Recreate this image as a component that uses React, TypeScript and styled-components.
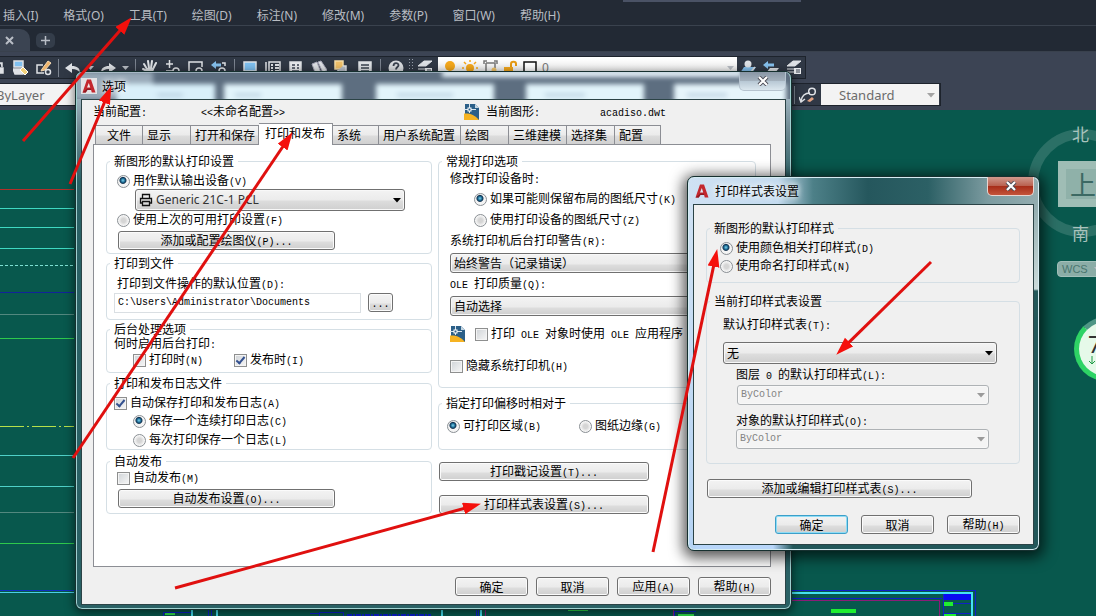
import React from "react";
import styled, { createGlobalStyle, css } from "styled-components";

const songti = '"Noto Sans CJK SC", sans-serif';
const yahei = '"Noto Sans", "Noto Sans CJK SC", sans-serif';

const GlobalStyle = createGlobalStyle`
  *, *::before, *::after { box-sizing: border-box; }
  body { margin: 0; background: #08584d; font-family: ${songti}; font-size: 12px; line-height: 14px; color: #000; }
  button, input, select { font: inherit; color: inherit; margin: 0; }
`;

/* ---------- application shell ---------- */

const Shell = styled.div`
  position: relative;
  display: flex;
  flex-direction: column;
  min-height: 100vh;
  overflow: hidden;
`;

const MenuBar = styled.nav`
  display: flex;
  align-items: center;
  gap: 25px;
  height: 26px;
  padding: 6px 3px 0;
  background: #232a35;
  border-bottom: 1px solid #3a424e;
  font-family: ${yahei};
`;

const MenuItem = styled.a`
  color: #b9bdc3;
  text-decoration: none;
  white-space: nowrap;
  line-height: 18px;
`;

const TitleEdge = styled.span`
  position: absolute;
  top: 0;
  left: 623px;
  width: 178px;
  height: 2px;
  background: #4a5265;
`;

const FileTabs = styled.div`
  display: flex;
  align-items: flex-end;
  gap: 6px;
  height: 26px;
  background: #222934;
  border-bottom: 1px solid #39414d;
`;

const FileTab = styled.button<{ $plus?: boolean }>`
  display: flex;
  align-items: center;
  justify-content: center;
  border: 0;
  padding: 0;
  color: #b4bac2;
  ${(p) =>
    p.$plus
      ? css`width: 19px; height: 15px; margin-bottom: 3px; border-radius: 5px; background: #343d4a;`
      : css`width: 30px; height: 22px; padding-right: 11px; border-radius: 0 10px 0 0; background: #3b4452;`}
`;

const Toolbars = styled.div`
  display: flex;
  flex-direction: column;
  align-items: flex-start;
  gap: 4px;
  height: 58px;
  padding-top: 4px;
  background: #3c4454;
`;

const ToolRow = styled.div`
  display: flex;
  align-items: center;
  height: 23px;
  background: #303845;
  border: 1px solid #1d232c;
  border-left: 0;
`;

const ToolGroup = styled.div<{ $gap?: number; $pad?: number }>`
  display: flex;
  align-items: center;
  gap: ${(p) => p.$gap ?? 7}px;
  padding: 0 ${(p) => p.$pad ?? 5}px;
`;

const Tool = styled.button<{ $w?: number }>`
  display: flex;
  align-items: center;
  justify-content: center;
  width: ${(p) => p.$w ?? 16}px;
  height: 18px;
  padding: 0;
  border: 0;
  background: none;
`;

const Divider = styled.span`
  width: 1px;
  height: 18px;
  background: #7b838f;
`;

const LayerBox = styled.div`
  display: flex;
  align-items: center;
  gap: 5px;
  width: 299px;
  height: 21px;
  padding: 0 3px 0 5px;
  background: linear-gradient(#ffffff, #e8e8e8);
  color: #777;
  font-family: ${yahei};
`;

const Push = styled.span`
  flex: 1;
`;

const PropertiesBar = styled.div`
  display: flex;
  width: 794px;
  overflow: hidden;
`;

const ToolSelectWrap = styled.div<{ $w: number; $clip?: boolean }>`
  position: relative;
  flex: none;
  width: ${(p) => p.$w}px;
  height: 21px;
  margin-right: 1px;
  margin-left: ${(p) => (p.$clip ? -22 : 0)}px;
`;

const ToolSelect = styled.select`
  appearance: none;
  width: 100%;
  height: 21px;
  padding: 0 18px;
  border: 0;
  border-radius: 0;
  background: #f3f3f3;
  color: #6c6c6c;
  font-family: ${yahei};
  font-size: 13px;
`;

/* ---------- drawing area ---------- */

const Canvas = styled.main`
  position: relative;
  flex: 1;
  background: #08584d;
`;

const Drawing = styled.svg`
  position: absolute;
  left: 0;
  top: 0;
`;

const ViewCube = styled.div`
  position: absolute;
  left: 1028px;
  top: 19px;
  width: 108px;
  height: 108px;
  border: 10px solid #2b7066;
  border-radius: 50%;
`;

const Compass = styled.span<{ $top: number }>`
  position: absolute;
  left: 34px;
  top: ${(p) => p.$top}px;
  color: #a9c3bd;
  font-size: 17px;
  line-height: 20px;
`;

const CubeFace = styled.div`
  position: absolute;
  left: 20px;
  top: 22px;
  display: flex;
  align-items: center;
  justify-content: center;
  width: 50px;
  height: 46px;
  background: #9fbdb5;
  color: #3c6963;
  font-size: 26px;
  line-height: 30px;

  span {
    padding: 0 4px;
    background: #8fb1a9;
  }
`;

const WcsButton = styled.button`
  position: absolute;
  left: 1057px;
  top: 151px;
  display: flex;
  align-items: center;
  gap: 6px;
  width: 60px;
  height: 16px;
  padding: 0 4px;
  border: 1px solid #a3c0ba;
  border-radius: 4px;
  background: #8bada7;
  color: #4a766f;
  font: 11px "Liberation Sans", sans-serif;
  text-align: left;
`;

const SpeedBall = styled.div`
  position: absolute;
  left: 1074px;
  top: 207px;
  width: 64px;
  height: 64px;
  padding: 10px 9px;
  border: 5px solid #2ed365;
  border-top-color: #4f9686;
  border-radius: 50%;
  background: #e6f9e9;
  color: #333;
  font: 24px/24px "Noto Sans", sans-serif;

  svg { display: block; }
`;

/* ---------- windows ---------- */

const Window = styled.section<{ $x: number; $y: number; $w: number }>`
  position: absolute;
  left: ${(p) => p.$x}px;
  top: ${(p) => p.$y}px;
  width: ${(p) => p.$w}px;
  padding: 0 5px 4px;
  border: 1px solid #16302f;
  border-radius: 7px;
`;

const OptionsWindow = styled(Window)`
  background:
    linear-gradient(#c3d3e0, #6c8790 60px, transparent 110px) 0 0 / 100% 120px no-repeat,
    #2a6165;
  box-shadow: inset 0 0 0 1px #9fd0cf, 0 2px 10px 1px rgba(0, 0, 0, 0.5);
`;

const StyleWindow = styled(Window)`
  padding-bottom: 5px;
  background:
    linear-gradient(90deg, #cfe1f3 0, #c4dbef 90px, #4d8088 125px, #25575d 180px, #2c6065 240px, #7c9ba0 300px, #94adb0) 0 0 / 100% 28px no-repeat,
    linear-gradient(#cfe1f3, #b3d2f4) 0 28px / 8px 100% no-repeat,
    linear-gradient(#94adb0, #cbdada 84px, #24585a 86px) 100% 28px / 8px 112px no-repeat,
    linear-gradient(90deg, #b8d6fa 85px, transparent 105px) 0 100% / 120px 8px no-repeat,
    #22575a;
  box-shadow: inset 0 0 0 1px #d5ecf2, 0 3px 14px 4px rgba(0, 0, 0, 0.65);
`;

const TitleBar = styled.header<{ $pad?: number }>`
  position: relative;
  display: flex;
  align-items: center;
  gap: 5px;
  height: 27px;
  padding-left: ${(p) => p.$pad ?? 1}px;
`;

const Glass = styled.svg`
  position: absolute;
  inset: 0 -4px 0 -4px;
  width: calc(100% + 8px);
  height: 27px;
  border-radius: 6px 6px 0 0;
`;

const WindowTitle = styled.h2`
  position: relative;
  flex: 1;
  margin: 0;
  font-size: 12px;
  font-weight: 400;
  text-shadow: 0 0 6px #fff, 0 0 6px #fff;
`;

const Close = styled.button<{ $red?: boolean }>`
  position: relative;
  align-self: flex-start;
  display: flex;
  align-items: center;
  justify-content: center;
  width: 47px;
  height: 19px;
  padding: 0;
  border: 1px solid ${(p) => (p.$red ? "#e9d5d0" : "#b5c3cf")};
  border-top: 0;
  border-radius: 0 0 5px 5px;
  background: ${(p) =>
    p.$red
      ? "linear-gradient(#cf9a8e 0, #b9604e 9px, #a62c18 9px, #c4543a)"
      : "linear-gradient(#8996a5 0, #a5b2be 9px, #b7c7d4 9px, #dbe7ee)"};
`;

const Client = styled.div<{ $pad: string }>`
  padding: ${(p) => p.$pad};
  border: 1px solid #2b4346;
  background: #f0f0f0;
`;

const ProfileLine = styled.div`
  display: grid;
  grid-template-columns: 108px 263px 22px 114px auto;
  align-items: center;
  height: 24px;
`;

const Tabs = styled.div`
  display: flex;
  align-items: flex-end;
  height: 20px;
  padding-left: 2px;
`;

const Tab = styled.button<{ $w: number; $on?: boolean }>`
  position: relative;
  width: ${(p) => p.$w}px;
  height: 19px;
  padding: 0 0 0 4px;
  border: 1px solid #8c8e94;
  border-width: 1px 1px 0 1px;
  background: linear-gradient(#f3f3f3, #ebebeb 9px, #dcdcdc 10px, #d0d0d0);
  text-align: left;
  white-space: nowrap;
  & + & { border-left: 0; }
  &:first-child { padding-left: 11px; }
  ${(p) =>
    p.$on &&
    css`
      height: 22px;
      margin-bottom: -1px;
      padding: 0 0 3px 6px;
      background: #fff;
    `}
`;

const Page = styled.div`
  display: grid;
  grid-template-columns: 326px 318px;
  column-gap: 6px;
  align-items: start;
  height: 423px;
  padding: 9px 12px 0;
  border: 1px solid #8c8e94;
  background: #fff;
`;

const Column = styled.div`
  display: flex;
  flex-direction: column;
`;

const GroupFrame = styled.fieldset<{ $mt: number }>`
  min-width: 0;
  margin: ${(p) => p.$mt}px 0 0;
  padding: 0;
  border: 1px solid #d5dfe5;
  border-radius: 4px;
`;

const Legend = styled.legend`
  height: 14px;
  margin-left: 3px;
  padding: 0 4px;
`;

const GroupBody = styled.div<{ $pad: string }>`
  padding: ${(p) => p.$pad};
`;

const Row = styled.div<{ $h?: number; $in?: number; $mt?: number; $gap?: number }>`
  display: flex;
  align-items: center;
  gap: ${(p) => p.$gap ?? 0}px;
  height: ${(p) => p.$h ?? 18}px;
  margin-top: ${(p) => p.$mt ?? 0}px;
  padding-left: ${(p) => p.$in ?? 0}px;
  white-space: nowrap;
`;

const Latin = styled.span`
  font-family: "Liberation Mono", monospace;
  font-size: 10px;
  white-space: pre;
`;

const ChoiceLabel = styled.label<{ $w?: number }>`
  display: flex;
  align-items: center;
  gap: 3px;
  width: ${(p) => (p.$w ? p.$w + "px" : "auto")};
  white-space: nowrap;
`;

const Radio = styled.input.attrs({ type: "radio" })`
  appearance: none;
  flex: none;
  width: 13px;
  height: 13px;
  border: 1px solid #8a8f94;
  border-radius: 50%;
  background: radial-gradient(circle, #d5d5d5 2px, #f6f6f6 5px);
  &:checked {
    background: radial-gradient(circle at 45% 40%, #7fd3ee 0, #1b6a93 2px, #12324f 3px, #f4f4f4 4px);
  }
`;

const Check = styled.input.attrs({ type: "checkbox" })`
  appearance: none;
  flex: none;
  display: grid;
  place-items: center;
  width: 13px;
  height: 13px;
  border: 1px solid #8e8f8f;
  background: linear-gradient(135deg, #cfd3d7, #f7f7f7);
  box-shadow: inset 0 0 0 1px #f4f4f4;
  &:checked::after {
    content: "";
    width: 5px;
    height: 9px;
    margin-bottom: 2px;
    border: solid #33508f;
    border-width: 0 2px 2px 0;
    transform: rotate(40deg);
  }
`;

const Push3d = styled.button<{ $w?: number; $mt?: number; $ml?: number; $primary?: boolean }>`
  display: block;
  width: ${(p) => p.$w ?? 73}px;
  height: 19px;
  margin: ${(p) => p.$mt ?? 0}px 0 0 ${(p) => p.$ml ?? 0}px;
  padding: 0;
  border: 1px solid ${(p) => (p.$primary ? "#3c9fc9" : "#707070")};
  border-radius: 3px;
  background: linear-gradient(#f3f3f3, #ebebeb 9px, #dddddd 10px, #cfcfcf);
  box-shadow: inset 0 0 0 1px ${(p) => (p.$primary ? "#8edcf5" : "#fbfbfb")};
  line-height: 15px;
  white-space: nowrap;
`;

const ComboWrap = styled.div<{ $w?: number; $mt?: number; $ml?: number }>`
  position: relative;
  display: flex;
  width: ${(p) => (p.$w ? p.$w + "px" : "auto")};
  margin: ${(p) => p.$mt ?? 0}px 0 0 ${(p) => p.$ml ?? 0}px;
`;

const ComboSelect = styled.select<{ $h: number; $icon?: boolean; $mono?: boolean }>`
  appearance: none;
  width: 100%;
  height: ${(p) => p.$h}px;
  padding: 0 20px 0 ${(p) => (p.$icon ? 20 : 3)}px;
  border: 1px solid #707070;
  border-radius: 3px;
  background: linear-gradient(#f3f3f3, #ebebeb 10px, #dddddd 11px, #cfcfcf);
  box-shadow: inset 0 0 0 1px #f8f8f8;
  ${(p) => p.$icon && css`font-family: ${yahei}; color: #333;`}
  ${(p) => p.$mono && css`font-family: "Liberation Mono", monospace; font-size: 10px;`}
  &:disabled {
    border-color: #aeb2b5;
    background: #f4f4f4;
    color: #838383;
    opacity: 1;
  }
`;

const ComboArrow = styled.svg`
  position: absolute;
  right: 4px;
  top: calc(50% - 2px);
  pointer-events: none;
`;

const ComboIcon = styled.span`
  position: absolute;
  left: 4px;
  top: 4px;
  display: flex;
  pointer-events: none;
`;

const PathInput = styled.input`
  width: 247px;
  height: 20px;
  padding: 0 3px;
  border: 1px solid #dadfe3;
  font-family: "Liberation Mono", monospace;
  font-size: 10px;
`;

const Footer = styled.footer<{ $mt: number; $gap: number }>`
  display: flex;
  justify-content: flex-end;
  gap: ${(p) => p.$gap}px;
  margin-top: ${(p) => p.$mt}px;
`;

const Arrows = styled.svg`
  position: absolute;
  left: 0;
  top: 0;
  pointer-events: none;
`;

/* ---------- small pieces ---------- */

/* Latin runs are set in half-width cells beside the full-width Chinese characters. */
const T = ({ s }: { s: string }) => (
  <span>
    {s.split(/([\x20-\x7e]+)/).map((part, i) => (i % 2 ? <Latin key={i}>{part}</Latin> : part))}
  </span>
);

const Group = ({ title, mt = 0, pad, children }: { title: string; mt?: number; pad: string; children: React.ReactNode }) => (
  <GroupFrame $mt={mt}>
    <Legend>{title}</Legend>
    <GroupBody $pad={pad}>{children}</GroupBody>
  </GroupFrame>
);

const RadioItem = ({ s, name, on, w }: { s: string; name: string; on?: boolean; w?: number }) => (
  <ChoiceLabel $w={w}>
    <Radio name={name} defaultChecked={on} />
    <T s={s} />
  </ChoiceLabel>
);

const CheckItem = ({ s, on, w }: { s: string; on?: boolean; w?: number }) => (
  <ChoiceLabel $w={w}>
    <Check defaultChecked={on} />
    <T s={s} />
  </ChoiceLabel>
);

type ComboProps = {
  id: string; value: string; h?: number; w?: number; mt?: number; ml?: number;
  disabled?: boolean; icon?: React.ReactNode; mono?: boolean; label?: string;
};

const Combo = ({ id, value, h = 20, w, mt, ml, disabled, icon, mono, label }: ComboProps) => (
  <ComboWrap $w={w} $mt={mt} $ml={ml}>
    <ComboSelect id={id} $h={h} $icon={!!icon} $mono={mono} disabled={disabled} aria-label={label}>
      <option>{value}</option>
    </ComboSelect>
    {icon && <ComboIcon>{icon}</ComboIcon>}
    <ComboArrow width="8" height="5" viewBox="0 0 8 5">
      <path d="M0 0h8L4 4.500z" fill={disabled ? "#9a9a9a" : "#000"} />
    </ComboArrow>
  </ComboWrap>
);

const CloseGlyph = () => (
  <svg width="12" height="10" viewBox="0 0 12 10">
    <path d="M2 1l8 8M10 1l-8 8" stroke="#4b4b55" strokeWidth="4" />
    <path d="M2 1l8 8M10 1l-8 8" stroke="#fff" strokeWidth="2.200" />
  </svg>
);

const LogoSvg = styled.svg`
  position: relative;
`;

const AppLogo = ({ tile }: { tile?: boolean }) => (
  <LogoSvg width="16" height="16" viewBox="0 0 16 16">
    {tile && <rect width="16" height="16" fill="#e3e3e6" />}
    <path d="M1.500 14.500L6 1.500h4l4.500 13h-3.700l-.7-2.500H6.400l-1.700 2.500z" fill="#c3272e" />
    <path d="M7.800 5l1.400 4.500H6z" fill={tile ? "#f3e9ea" : "#dce8f4"} />
    <path d="M1.500 14.500l5-4h3.300l.4 1.500H6.400l-1.700 2.500z" fill="#8e1a22" />
  </LogoSvg>
);

const DwgIcon = () => (
  <svg width="16" height="16" viewBox="0 0 16 16">
    <path d="M1 0h10l4 4v12H1z" fill="#2b5f88" />
    <path d="M11 0l4 4h-4z" fill="#c5d6e2" />
    <path d="M0 9.500c5-.5 11 1 15 6.500H0z" fill="#f6b322" />
    <path d="M0 5.500h12M5.500 0v9" stroke="#d9e6ef" strokeWidth="1" />
    <rect x="4" y="4" width="3" height="3" fill="#2b5f88" stroke="#fff" />
  </svg>
);

const PrinterIcon = () => (
  <svg width="14" height="14" viewBox="0 0 14 14" fill="none" stroke="#111" strokeWidth="1.300">
    <path d="M3.500 5V1.500h7V5M3 10H1.500V5.500h11V10H11M3.500 8.500h7v4h-7z" />
  </svg>
);

const DownMark = () => (
  <svg width="7" height="4" viewBox="0 0 7 4"><path d="M0 0h7L3.500 4z" fill="#b9bec5" /></svg>
);

const Ico = ({ children, w = 16 }: { children: React.ReactNode; w?: number }) => (
  <svg width={w} height="16" viewBox={`0 0 ${w} 16`} fill="none" stroke="#dfe2e6" strokeWidth="1.500">{children}</svg>
);

const PlotIcon = () => (
  <Ico>
    <rect x="1" y="1" width="9" height="6" fill="#7fc0f0" /><path d="M0 9h10v5H2z" fill="#dfe2e6" />
    <path d="M7 10l3-3 5 5-3 3z" fill="#f2d27c" stroke="#fff" strokeWidth="1" />
  </Ico>
);
const EditGearIcon = () => (
  <Ico>
    <path d="M7 5H1v8h7" /><path d="M6 9l6-8 3 2-6 7-4 1z" fill="#f0b46a" stroke="#f3d9b5" strokeWidth="1" />
    <circle cx="12" cy="12" r="2.500" />
  </Ico>
);
const UndoIcon = () => <Ico><path d="M0 8l7-5v3c5 0 8 2 8 7-2-3-4-4-8-4v4z" fill="#dfe2e6" stroke="none" /></Ico>;
const RedoIcon = () => <Ico><path d="M16 8L9 3v3c-5 0-8 2-8 7 2-3 4-4 8-4v4z" fill="#dfe2e6" stroke="none" /></Ico>;
const HandIcon = () => (
  <Ico>
    <path d="M5 9L2 4M7 8L6 1M9 8l1-7M11 9l3-6M5 11L1 9" strokeWidth="2" strokeLinecap="round" />
    <path d="M4 8h8l-1 6H6z" fill="#dfe2e6" stroke="none" />
  </Ico>
);
const ZoomPlusIcon = () => <Ico><path d="M1 4h7M4.500 0v8M1 11h7" /><circle cx="11" cy="11" r="3" /></Ico>;
const ZoomWindowIcon = () => <Ico><path d="M8 12H1V2h13v5" /><circle cx="11" cy="11" r="3" /></Ico>;
const ZoomPrevIcon = () => (
  <Ico><path d="M0 5l5-4v2.500h5v3H5V9z" fill="#86c1ee" stroke="none" /><path d="M11 3h3v3M3 11v2h4" /><circle cx="11" cy="11" r="3" /></Ico>
);
const MonitorIcon = () => <Ico><rect x="2" y="2" width="12" height="9" fill="#7fc0f0" /><path d="M4 14h8" /></Ico>;
const PaletteIcon = () => (
  <Ico><path d="M1 2v13M4 2h11v12H4z" /><path d="M6 5h2M6 8h2M6 11h2M10 5h4M10 8h4M10 11h4" strokeWidth="2" /></Ico>
);
const TableIcon = () => (
  <Ico><rect x="2" y="2" width="11" height="12" fill="#e9ebee" /><path d="M4 5h3M9 5h2M4 8h3M9 8h2M4 11h7" stroke="#3a4250" /></Ico>
);
const SheetsIcon = () => <Ico><path d="M1 4l5-2 4 11-5 2zM7 2l3-1 6 9-4 3z" fill="#dfe2e6" strokeWidth="1" stroke="#aab" /></Ico>;
const MarkupIcon = () => (
  <Ico><path d="M1 1h8v8H1z" fill="#f0c069" stroke="#f5dba5" /><path d="M9 6h3v6h3v2H4v-4" fill="#b9bfc8" /></Ico>
);
const CalcIcon = () => <Ico><rect x="2" y="2" width="12" height="13" fill="#dfe2e6" /><path d="M4 5h8M4 8h8M4 11h8" stroke="#39414e" /></Ico>;
const HelpIcon = () => (
  <Ico><circle cx="8" cy="8" r="7.500" fill="#d9dce0" stroke="none" /><path d="M5.500 6c0-4 5-3.500 5-.8C10.500 7 8 7 8 9.500M8 11v2" stroke="#39414e" strokeWidth="1.800" /></Ico>
);
const LayersIcon = () => (
  <Ico>
    <path d="M1 6l6-5h8L9 6zM1 9h7M1 12h7" fill="#dfe2e6" strokeWidth="1" />
    <rect x="8" y="8" width="7" height="6" fill="#e9ebee" stroke="none" /><path d="M10 10h4M10 12h4" stroke="#39414e" strokeWidth="1" />
  </Ico>
);
const LayerUserIcon = () => (
  <Ico><path d="M0 13l4-6h12l-4 6z" fill="#86c1ee" stroke="none" /><circle cx="8" cy="4" r="3.500" fill="#dfe2e6" stroke="none" /><path d="M10 13l5-6" stroke="#dfe2e6" /></Ico>
);
const LayerBackIcon = () => (
  <Ico><path d="M0 5l5-4v2.500h6v3H5V9z" fill="#86c1ee" stroke="none" /><path d="M3 13l4-5h9l-4 5z" fill="#dfe2e6" stroke="none" /></Ico>
);
const LeaderIcon = () => (
  <Ico w={18}>
    <path d="M2 14C3 8 6 6 11 6M0 10l2 5 4-3" /><circle cx="13" cy="4.500" r="3.300" />
    <path d="M8 14l5-4 2 2-4 3z" fill="#e0a183" stroke="none" />
  </Ico>
);
const BulbIcon = () => <Ico w={14}><circle cx="7" cy="6" r="5" fill="#f5a81c" stroke="none" /><path d="M4 12h6" stroke="#999" /></Ico>;
const SunIcon = () => (
  <Ico><circle cx="8" cy="8" r="4" fill="#f5a81c" stroke="none" /><path d="M8 0v2M8 14v2M0 8h2M14 8h2M2 2l2 2M12 12l2 2M14 2l-2 2M2 14l2-2" stroke="#f5a81c" /></Ico>
);
const ViewportSunIcon = () => (
  <Ico w={15}><path d="M1 4V1h3M11 1h3v3M3 3v10h5M3 3h9v5" stroke="#777" /><circle cx="11" cy="10" r="2.500" fill="#f5c66a" stroke="none" /></Ico>
);
const LockIcon = () => <Ico w={15}><rect x="1" y="7" width="9" height="7" fill="#f5a81c" stroke="none" /><path d="M8 7V4c0-3 5-3 5 0v2" stroke="#e69a12" strokeWidth="2" /></Ico>;
const SwatchIcon = () => <Ico w={14}><rect x="1" y="2" width="12" height="12" fill="#fff" stroke="#111" /></Ico>;

const menus = ["插入(I)", "格式(O)", "工具(T)", "绘图(D)", "标注(N)", "修改(M)", "参数(P)", "窗口(W)", "帮助(H)"];

const tabs: [string, number][] = [
  ["文件", 48], ["显示", 48], ["打开和保存", 68], ["打印和发布", 74], ["系统", 46],
  ["用户系统配置", 82], ["绘图", 48], ["三维建模", 58], ["选择集", 48], ["配置", 46],
];

/* y position, colour and dash of each visible line of the drawing */
const lines: [number, string, string?][] = [
  [79, "#b3302a"], [98, "#3fd9c2"], [117, "#3fd9c2"], [138, "#3fd9c2"], [155, "#7fe0d4", "3 2"],
  [182, "#12239a"], [204, "#53887f"], [228, "#2ec94c"], [316, "#b6e04a", "24 3 2 3"], [345, "#4fd0c8"],
  [376, "#4fd0c8"], [402, "#53887f"], [433, "#2ec94c"], [480, "#0f2fc0"], [482, "#49cfe8"],
];

const arrows: [number, number, number, number][] = [
  [23, 141, 131, 18], [70, 184, 111, 87], [73, 458, 292, 133],
  [175, 588, 480, 504], [653, 552, 717, 250], [931, 262, 837, 354],
];

const OptionsDialog = () => (
  <OptionsWindow $x={75} $y={71} $w={717} role="dialog" aria-label="选项">
    <TitleBar $pad={0}>
      <Glass viewBox="0 0 713 27" preserveAspectRatio="none">
        <defs>
          <filter id="soft" x="-10%" y="-40%" width="120%" height="180%"><feGaussianBlur stdDeviation="2.500" /></filter>
        </defs>
        <rect width="713" height="27" fill="#5d6e80" />
        <g filter="url(#soft)">
          <rect x="-4" y="0" width="80" height="28" fill="#98a9b8" />
          <rect x="365" y="-2" width="300" height="7" fill="#e6f3fa" />
          <rect x="40" y="12" width="98" height="20" fill="#d9f0fa" />
          <rect x="147" y="12" width="118" height="20" fill="#e2f4fb" />
          <rect x="299" y="12" width="118" height="20" fill="#e2f4fb" />
          <rect x="449" y="12" width="118" height="20" fill="#e2f4fb" />
          <rect x="597" y="12" width="112" height="20" fill="#e6f5fb" />
          <path d="M80 23h26M158 23h26M320 23h56M468 23h40M610 23h40" stroke="#b4cbdd" strokeWidth="3" />
        </g>
        <path d="M4 0h705" stroke="#cfe0ea" strokeWidth="1" />
      </Glass>
      <AppLogo tile />
      <WindowTitle>选项</WindowTitle>
      <Close aria-label="关闭"><CloseGlyph /></Close>
    </TitleBar>
    <Client $pad="0 14px 8px 11px">
      <ProfileLine>
        <T s="当前配置:" />
        <T s="<<未命名配置>>" />
        <DwgIcon />
        <T s="当前图形:" />
        <T s="acadiso.dwt" />
      </ProfileLine>
      <Tabs role="tablist">
        {tabs.map(([name, w]) => (
          <Tab key={name} role="tab" $w={w} $on={name === "打印和发布"} aria-selected={name === "打印和发布"}>{name}</Tab>
        ))}
      </Tabs>
      <Page role="tabpanel">
        <Column>
          <Group title="新图形的默认打印设置" pad="5px 0 3px 10px">
            <Row $h={16}><RadioItem s="用作默认输出设备(V)" name="device" on /></Row>
            <Combo id="device" label="输出设备" value="Generic 21C-1 PCL" h={22} w={270} ml={18} icon={<PrinterIcon />} />
            <Row><RadioItem s="使用上次的可用打印设置(F)" name="device" /></Row>
            <Push3d $w={217} $mt={2} $ml={1}><T s="添加或配置绘图仪(P)..." /></Push3d>
          </Group>
          <Group title="打印到文件" mt={2} pad="6px 0 6px 7px">
            <Row as="label" htmlFor="folder" $h={16} $in={3}><T s="打印到文件操作的默认位置(D):" /></Row>
            <Row $h={21} $gap={7}>
              <PathInput id="folder" defaultValue="C:\Users\Administrator\Documents" />
              <Push3d $w={25}><T s="..." /></Push3d>
            </Row>
          </Group>
          <Group title="后台处理选项" mt={2} pad="1px 0 3px 7px">
            <Row $h={14}><T s="何时启用后台打印:" /></Row>
            <Row $in={19}>
              <CheckItem s="打印时(N)" w={101} />
              <CheckItem s="发布时(I)" on />
            </Row>
          </Group>
          <Group title="打印和发布日志文件" mt={3} pad="4px 0 0 7px">
            <Row><CheckItem s="自动保存打印和发布日志(A)" on /></Row>
            <Row $in={19}><RadioItem s="保存一个连续打印日志(C)" name="log" on /></Row>
            <Row $in={19} $mt={1}><RadioItem s="每次打印保存一个日志(L)" name="log" /></Row>
          </Group>
          <Group title="自动发布" mt={4} pad="1px 0 5px 10px">
            <Row><CheckItem s="自动发布(M)" /></Row>
            <Push3d $w={217} $mt={2} $ml={1}><T s="自动发布设置(O)..." /></Push3d>
          </Group>
        </Column>
        <Column>
          <Group title="常规打印选项" pad="4px 0 12px 11px">
            <Row $h={14}><T s="修改打印设备时:" /></Row>
            <Row $mt={4} $in={24}><RadioItem s="如果可能则保留布局的图纸尺寸(K)" name="paper" on /></Row>
            <Row $mt={3} $in={24}><RadioItem s="使用打印设备的图纸尺寸(Z)" name="paper" /></Row>
            <Row as="label" htmlFor="spool" $h={14} $mt={5}><T s="系统打印机后台打印警告(R):" /></Row>
            <Combo id="spool" value="始终警告（记录错误）" mt={5} w={290} />
            <Row as="label" htmlFor="ole" $h={14} $mt={4}><T s="OLE 打印质量(Q):" /></Row>
            <Combo id="ole" value="自动选择" mt={5} w={290} />
            <Row $mt={9} $gap={9}><DwgIcon /><CheckItem s="打印 OLE 对象时使用 OLE 应用程序" /></Row>
            <Row $mt={14}><CheckItem s="隐藏系统打印机(H)" /></Row>
          </Group>
          <Group title="指定打印偏移时相对于" mt={8} pad="7px 0 14px 8px">
            <Row>
              <RadioItem s="可打印区域(B)" name="offset" on w={132} />
              <RadioItem s="图纸边缘(G)" name="offset" />
            </Row>
          </Group>
          <Push3d $w={210} $mt={12} $ml={1}><T s="打印戳记设置(T)..." /></Push3d>
          <Push3d $w={210} $mt={14} $ml={1}><T s="打印样式表设置(S)..." /></Push3d>
        </Column>
      </Page>
      <Footer $mt={10} $gap={8}>
        <Push3d>确定</Push3d>
        <Push3d>取消</Push3d>
        <Push3d><T s="应用(A)" /></Push3d>
        <Push3d><T s="帮助(H)" /></Push3d>
      </Footer>
    </Client>
  </OptionsWindow>
);

const StyleDialog = () => (
  <StyleWindow $x={687} $y={176} $w={353} role="dialog" aria-label="打印样式表设置">
    <TitleBar>
      <AppLogo />
      <WindowTitle>打印样式表设置</WindowTitle>
      <Close $red aria-label="关闭"><CloseGlyph /></Close>
    </TitleBar>
    <Client $pad="16px 13px 10px 12px">
      <Group title="新图形的默认打印样式" pad="4px 0 7px 13px">
        <Row><RadioItem s="使用颜色相关打印样式(D)" name="style" on /></Row>
        <Row><RadioItem s="使用命名打印样式(N)" name="style" /></Row>
      </Group>
      <Group title="当前打印样式表设置" mt={11} pad="10px 22px 14px 16px">
        <Row as="label" htmlFor="table" $h={14}><T s="默认打印样式表(T):" /></Row>
        <Combo id="table" value="无" h={22} mt={10} />
        <Row as="label" htmlFor="layer0" $h={14} $mt={4} $in={13}><T s="图层 0 的默认打印样式(L):" /></Row>
        <Combo id="layer0" value="ByColor" mt={3} ml={14} w={252} disabled mono />
        <Row as="label" htmlFor="object" $h={14} $mt={9} $in={13}><T s="对象的默认打印样式(O):" /></Row>
        <Combo id="object" value="ByColor" mt={1} ml={13} w={253} disabled mono />
      </Group>
      <Push3d $w={265} $mt={15} $ml={1}><T s="添加或编辑打印样式表(S)..." /></Push3d>
      <Footer $mt={17} $gap={13}>
        <Push3d $primary>确定</Push3d>
        <Push3d>取消</Push3d>
        <Push3d><T s="帮助(H)" /></Push3d>
      </Footer>
    </Client>
  </StyleWindow>
);

export default function App() {
  return (
    <Shell>
      <GlobalStyle />
      <MenuBar>
        {menus.map((m) => <MenuItem key={m} href="#">{m}</MenuItem>)}
        <TitleEdge />
      </MenuBar>
      <FileTabs>
        <FileTab aria-label="关闭">
          <svg width="9" height="9" viewBox="0 0 9 9"><path d="M1 1l7 7M8 1L1 8" stroke="#b9bec6" strokeWidth="2" /></svg>
        </FileTab>
        <FileTab $plus aria-label="新建">
          <svg width="9" height="9" viewBox="0 0 9 9"><path d="M0 4.500h9M4.500 0v9" stroke="#b9bec6" strokeWidth="1.500" /></svg>
        </FileTab>
      </FileTabs>
      <Toolbars>
        <ToolRow>
          <ToolGroup $pad={0}>
            <Tool $w={6} aria-label="打印"><Ico w={6}><path d="M0 8h3v5H0zM0 3h2v4" fill="#dfe2e6" /></Ico></Tool>
            <Tool aria-label="发布"><PlotIcon /></Tool>
            <Tool aria-label="编辑"><EditGearIcon /></Tool>
          </ToolGroup>
          <ToolGroup $pad={6} $gap={6}>
            <Divider />
            <Tool aria-label="放弃"><UndoIcon /></Tool>
            <Tool $w={7} aria-label="放弃列表"><DownMark /></Tool>
            <Tool aria-label="重做"><RedoIcon /></Tool>
            <Tool $w={7} aria-label="重做列表"><DownMark /></Tool>
            <Divider />
          </ToolGroup>
          <ToolGroup $pad={0}>
            <Tool aria-label="平移"><HandIcon /></Tool>
            <Tool aria-label="实时缩放"><ZoomPlusIcon /></Tool>
            <Tool aria-label="窗口缩放"><ZoomWindowIcon /></Tool>
            <Tool aria-label="缩放上一个"><ZoomPrevIcon /></Tool>
            <Divider />
            <Tool aria-label="特性"><MonitorIcon /></Tool>
            <Tool aria-label="设计中心"><PaletteIcon /></Tool>
            <Tool aria-label="工具选项板"><TableIcon /></Tool>
            <Tool aria-label="图纸集"><SheetsIcon /></Tool>
            <Tool aria-label="标记集"><MarkupIcon /></Tool>
            <Tool aria-label="计算器"><CalcIcon /></Tool>
            <Divider />
            <Tool aria-label="帮助"><HelpIcon /></Tool>
          </ToolGroup>
          <ToolGroup $gap={4} $pad={5}>
            <svg width="4" height="18" viewBox="0 0 4 18"><path d="M.5 0v18M3.500 0v18" stroke="#98a0ab" strokeDasharray="1 2" /></svg>
            <Tool aria-label="图层特性"><LayersIcon /></Tool>
          </ToolGroup>
          <LayerBox>
            <BulbIcon /><SunIcon /><ViewportSunIcon /><LockIcon /><SwatchIcon />
            <span>0</span>
            <Push />
            <DownMark />
          </LayerBox>
          <ToolGroup $pad={3}>
            <Tool aria-label="置为当前"><LayerUserIcon /></Tool>
            <Tool aria-label="上一个图层"><LayerBackIcon /></Tool>
            <Tool aria-label="图层状态"><LayersIcon /></Tool>
          </ToolGroup>
        </ToolRow>
        <ToolRow>
          <PropertiesBar>
            <ToolSelectWrap $w={235} $clip>
              <ToolSelect aria-label="颜色"><option>ByLayer</option></ToolSelect>
            </ToolSelectWrap>
          </PropertiesBar>
          <ToolGroup $gap={4} $pad={0}>
            <Divider />
            <Tool $w={18} aria-label="多重引线样式"><LeaderIcon /></Tool>
            <ToolSelectWrap $w={118}>
              <ToolSelect aria-label="引线样式"><option>Standard</option></ToolSelect>
              <ComboArrow width="8" height="5" viewBox="0 0 8 5"><path d="M0 0h8L4 4.500z" fill="#a3a3a3" /></ComboArrow>
            </ToolSelectWrap>
          </ToolGroup>
        </ToolRow>
      </Toolbars>
      <Canvas>
        <Drawing width="1096" height="506" viewBox="0 0 1096 506" fill="none" shapeRendering="crispEdges">
          {lines.map(([y, c, dash]) => (
            <path key={y} d={`M0 ${y}.500h74`} stroke={c} strokeDasharray={dash} />
          ))}
          <path d="M163 506v-4h28v4M208 500v6M211 500v6M310 503h10M319 506v-4h24v4M674 506v-5h22M476 500v6M478 500v6" stroke="#0c1fd0" />
          <path d="M347 505h84" stroke="#0c1fd0" strokeWidth="3" strokeDasharray="5 1 2 1" />
          <path d="M165 504h10M568 500h20M678 505h16" stroke="#2fe04a" strokeWidth="2" />
          <path d="M192 500v6M217 500v6M442 500v6M481 500v6" stroke="#46e2f2" strokeWidth="2" />
          <path d="M485 500v6M673 500v6" stroke="#8b1d78" />
          <path d="M792 480.500h183V506M792 488.500h150M943.500 484v22M944 493.500h28M944 503.500h28" stroke="#1020c8" />
          <path d="M792 482.500h180V506" stroke="#46e2f2" strokeWidth="2" />
          <path d="M792 490.500h147V506" stroke="#8b1d78" />
          <rect x="944" y="484" width="27" height="6" fill="#0a0af0" />
          <path d="M944 492h9v4h-9zM831 499h25v4h-25zM944 504h12v2h-12z" fill="#1fee30" />
        </Drawing>
        <ViewCube>
          <Compass $top={-15}>北</Compass>
          <CubeFace><span>上</span></CubeFace>
          <Compass $top={84}>南</Compass>
        </ViewCube>
        <WcsButton>WCS<DownMark /></WcsButton>
        <SpeedBall>
          7
          <svg width="8" height="9" viewBox="0 0 8 9"><path d="M4 0v8M1 5l3 3 3-3" stroke="#1f9a45" fill="none" /></svg>
        </SpeedBall>
      </Canvas>
      <OptionsDialog />
      <StyleDialog />
      <Arrows width="1096" height="616" viewBox="0 0 1096 616" aria-hidden="true">
        <defs>
          <marker id="head" markerUnits="userSpaceOnUse" markerWidth="18" markerHeight="14" refX="17" refY="6" orient="auto">
            <path d="M0 0l18 6-18 6z" fill="#f5100c" />
          </marker>
        </defs>
        {arrows.map(([x1, y1, x2, y2]) => {
          const k = 1 - 6 / Math.hypot(x2 - x1, y2 - y1);
          return (
            <g key={x1}>
              <path d={`M${x1} ${y1}L${x1 + (x2 - x1) * k} ${y1 + (y2 - y1) * k}`} stroke="#e0100f" strokeWidth="3" />
              <path d={`M${x1} ${y1}L${x2} ${y2}`} markerEnd="url(#head)" />
            </g>
          );
        })}
      </Arrows>
    </Shell>
  );
}
